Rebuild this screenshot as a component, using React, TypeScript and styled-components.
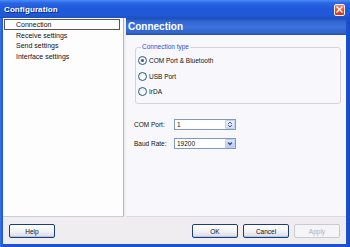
import React from "react";
import styled, { createGlobalStyle } from "styled-components";

const GlobalStyle = createGlobalStyle`
  html, body { margin: 0; padding: 0; }
  body { font-family: "Liberation Sans", Arial, sans-serif; font-size: 7px; }
  * { box-sizing: border-box; }
`;

const Window = styled.div`
  width: 350px;
  height: 247px;
  display: flex;
  flex-direction: column;
  background: linear-gradient(to right, #3a73e6 0px, #1d52d4 3px, #1d52d4 346px, #1a48c4 350px);
  overflow: hidden;
`;

const TitleBar = styled.div`
  height: 18px;
  flex: none;
  display: flex;
  align-items: center;
  justify-content: space-between;
  padding: 0 5px 0 4px;
  background: linear-gradient(to bottom, #4b8cf6 0px, #2a66e4 3px, #1f58da 9px, #2159d6 15px, #1a4fc8 18px);
`;

const Title = styled.span`
  color: #ffffff;
  font-weight: bold;
  font-size: 8px;
  letter-spacing: 0.1px;
  text-shadow: 1px 1px 0 #0a2a8a;
`;

const CloseButton = styled.div`
  width: 11px;
  height: 12px;
  margin-top: 1px;
  border: 1px solid #f4ece8;
  border-radius: 2px;
  background: linear-gradient(to bottom, #ef8a62, #df4a1c 60%, #c9391a);
  display: flex;
  align-items: center;
  justify-content: center;
`;

const Frame = styled.div`
  flex: 1;
  display: flex;
  flex-direction: column;
  margin: 0 4px 3px 3px;
  background: #efedf0;
`;

const Main = styled.div`
  height: 199px;
  flex: none;
  display: flex;
`;

const Sidebar = styled.div`
  width: 121px;
  margin-right: 2px;
  background: #fdfdfe;
  border-right: 1px solid #b4b3b8;
  border-bottom: 1px solid #cfcdd2;
  padding-top: 1px;
  display: flex;
  flex-direction: column;
`;

const NavItem = styled.div<{ $selected?: boolean }>`
  height: 10.7px;
  margin: 0 3px 0 1px;
  padding-left: 11px;
  display: flex;
  align-items: center;
  color: #111111;
  font-size: 7px;
  border: 1px solid ${(p) => (p.$selected ? "#555555" : "transparent")};
`;

const Panel = styled.div`
  flex: 1;
  display: flex;
  flex-direction: column;
  background: #f8f8fc;
  border-bottom: 1px solid #dddbe0;
`;

const PanelHeader = styled.div`
  height: 17px;
  flex: none;
  display: flex;
  align-items: center;
  padding-left: 2px;
  color: #ffffff;
  font-weight: bold;
  font-size: 10px;
  background: linear-gradient(to bottom, #1f4eb4 0px, #3468d4 4px, #3c70da 9px, #3064cc 15px, #1d4aa8 17px);
`;

const PanelBody = styled.div`
  flex: 1;
  display: flex;
  flex-direction: column;
  padding: 8px 5px 0 9px;
`;

const GroupBox = styled.fieldset`
  margin: 0;
  padding: 2px 0 3px 2px;
  min-width: 0;
  border: 1px solid #d5d3d8;
  border-radius: 3px;
  display: flex;
  flex-direction: column;
`;

const Legend = styled.legend`
  padding: 0 1px;
  margin-left: 3px;
  font-size: 6.5px;
  line-height: 8px;
  color: #1f4fd0;
`;

const RadioRow = styled.div`
  height: 15.5px;
  display: flex;
  align-items: center;
  gap: 2px;
  color: #111111;
  font-size: 6.5px;
`;

const RadioCircle = styled.span<{ $checked?: boolean }>`
  width: 9px;
  height: 9px;
  border-radius: 50%;
  border: 1px solid #2c5a8c;
  background: radial-gradient(circle at 65% 70%, #ffffff 0%, #e4e4de 100%);
  display: flex;
  align-items: center;
  justify-content: center;
  &::after {
    content: "";
    width: 3px;
    height: 3px;
    border-radius: 50%;
    background: ${(p) => (p.$checked ? "#3d5a72" : "transparent")};
  }
`;

const FormArea = styled.div`
  display: flex;
  flex-direction: column;
  gap: 8px;
  margin-top: 15px;
  margin-left: -1px;
`;

const FormRow = styled.div`
  display: flex;
  align-items: center;
  height: 11px;
`;

const FieldLabel = styled.span`
  width: 40px;
  color: #111111;
  font-size: 6.5px;
`;

const InputBox = styled.div`
  width: 62px;
  height: 11px;
  border: 1px solid #7f9db9;
  background: #ffffff;
  display: flex;
  align-items: center;
  justify-content: space-between;
  padding-left: 2px;
  color: #111111;
  font-size: 6.5px;
`;

const SpinButton = styled.div`
  width: 10px;
  height: 9px;
  border: 1px solid #c2cfe8;
  border-radius: 1px;
  background: linear-gradient(to bottom, #eef2fb, #d3dcef);
  display: flex;
  align-items: center;
  justify-content: center;
`;

const DropButton = styled.div`
  width: 10px;
  height: 9px;
  border: 1px solid #b9cdf4;
  border-radius: 1px;
  background: linear-gradient(to bottom, #e2eafd, #b8ccf6);
  display: flex;
  align-items: center;
  justify-content: center;
`;

const Footer = styled.div`
  flex: 1;
  display: flex;
  align-items: flex-start;
  padding: 7px 6px 0 6px;
  gap: 5px;
`;

const Spacer = styled.div`
  flex: 1;
`;

const Button = styled.button<{ $disabled?: boolean }>`
  width: 46px;
  height: 14px;
  padding: 0;
  font-family: "Liberation Sans", Arial, sans-serif;
  font-size: 6.5px;
  border-radius: 2px;
  border: 1px solid ${(p) => (p.$disabled ? "#cac8d0" : "#1c3e78")};
  color: ${(p) => (p.$disabled ? "#b0aeb6" : "#111111")};
  background: ${(p) =>
    p.$disabled
      ? "#f5f4f7"
      : "linear-gradient(to bottom, #ffffff 0%, #f3f3f6 50%, #e2e2ea 85%, #c9cfe6 100%)"};
  box-shadow: ${(p) => (p.$disabled ? "none" : "inset 0 -1px 0 #b9c5e6")};
`;

export default function App() {
  return (
    <>
      <GlobalStyle />
      <Window>
        <TitleBar>
          <Title>Configuration</Title>
          <CloseButton>
            <svg width="7" height="7" viewBox="0 0 7 7">
              <path d="M1 1 L6 6 M6 1 L1 6" stroke="#ffffff" strokeWidth="1.4" strokeLinecap="square" />
            </svg>
          </CloseButton>
        </TitleBar>
        <Frame>
          <Main>
            <Sidebar>
              <NavItem $selected>Connection</NavItem>
              <NavItem>Receive settings</NavItem>
              <NavItem>Send settings</NavItem>
              <NavItem>Interface settings</NavItem>
            </Sidebar>
            <Panel>
              <PanelHeader>Connection</PanelHeader>
              <PanelBody>
                <GroupBox>
                  <Legend>Connection type</Legend>
                  <RadioRow>
                    <RadioCircle $checked />
                    COM Port &amp; Bluetooth
                  </RadioRow>
                  <RadioRow>
                    <RadioCircle />
                    USB Port
                  </RadioRow>
                  <RadioRow>
                    <RadioCircle />
                    IrDA
                  </RadioRow>
                </GroupBox>
                <FormArea>
                  <FormRow>
                    <FieldLabel>COM Port:</FieldLabel>
                    <InputBox>
                      1
                      <SpinButton>
                        <svg width="6" height="7" viewBox="0 0 6 7">
                          <path d="M1 3 L3 1 L5 3 M1 4 L3 6 L5 4" stroke="#4d6185" strokeWidth="1" fill="none" />
                        </svg>
                      </SpinButton>
                    </InputBox>
                  </FormRow>
                  <FormRow>
                    <FieldLabel>Baud Rate:</FieldLabel>
                    <InputBox>
                      19200
                      <DropButton>
                        <svg width="6" height="5" viewBox="0 0 6 5">
                          <path d="M1 1.5 L3 3.5 L5 1.5" stroke="#3a4f85" strokeWidth="1.3" fill="none" />
                        </svg>
                      </DropButton>
                    </InputBox>
                  </FormRow>
                </FormArea>
              </PanelBody>
            </Panel>
          </Main>
          <Footer>
            <Button>Help</Button>
            <Spacer />
            <Button>OK</Button>
            <Button>Cancel</Button>
            <Button $disabled>Apply</Button>
          </Footer>
        </Frame>
      </Window>
    </>
  );
}
